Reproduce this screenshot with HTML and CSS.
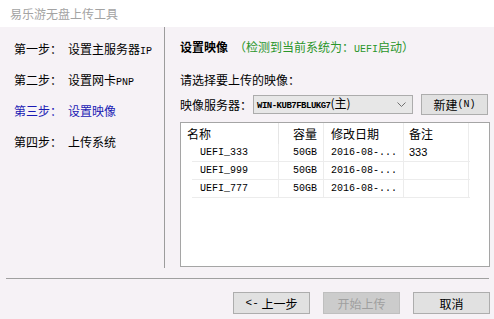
FILE: index.html
```html
<!DOCTYPE html>
<html>
<head>
<meta charset="utf-8">
<link rel="stylesheet" href="styles.css">
</head>
<body>
<div class="window">
  <div class="titlebar">易乐游无盘上传工具</div>
  <div class="main">
    <div class="steps">
      <div class="step"><span class="label">第一步：</span><span>设置主服务器<span class="lat">IP</span></span></div>
      <div class="step"><span class="label">第二步：</span><span>设置网卡<span class="lat">PNP</span></span></div>
      <div class="step active"><span class="label">第三步：</span><span>设置映像</span></div>
      <div class="step"><span class="label">第四步：</span><span>上传系统</span></div>
    </div>
    <div class="content">
      <div class="heading"><b>设置映像</b><span class="detect">（检测到当前系统为：<span class="lat">UEFI</span>启动）</span></div>
      <div class="prompt">请选择要上传的映像：</div>
      <div class="server-row">
        <span class="server-label">映像服务器：</span>
        <div class="combo">
          <span class="combo-text"><span class="host">WIN-KUB7FBLUKG7</span>(主)</span>
          <svg class="chev" width="9" height="6" viewBox="0 0 9 6"><polyline points="0.5,0.5 4.5,4.5 8.5,0.5" fill="none" stroke="#707070" stroke-width="1"/></svg>
        </div>
        <div class="btn new-btn">新建<span class="lat">(N)</span></div>
      </div>
      <div class="listbox">
        <div class="lv-head">
          <div class="c1 hc">名称</div>
          <div class="c2 hc right">容量</div>
          <div class="c3 hc">修改日期</div>
          <div class="c4 hc">备注</div>
        </div>
        <div class="lv-row">
          <div class="r1 mono">UEFI_333</div>
          <div class="c2 mono right">50GB</div>
          <div class="c3 mono">2016-08-...</div>
          <div class="c4 note">333</div>
        </div>
        <div class="lv-row">
          <div class="r1 mono">UEFI_999</div>
          <div class="c2 mono right">50GB</div>
          <div class="c3 mono">2016-08-...</div>
          <div class="c4 note"></div>
        </div>
        <div class="lv-row">
          <div class="r1 mono">UEFI_777</div>
          <div class="c2 mono right">50GB</div>
          <div class="c3 mono">2016-08-...</div>
          <div class="c4 note"></div>
        </div>
      </div>
    </div>
  </div>
  <div class="footer">
    <div class="sep"></div>
    <div class="buttons">
      <div class="btn fbtn"><span class="arrow">&lt;-</span>&nbsp;上一步</div>
      <div class="btn fbtn disabled">开始上传</div>
      <div class="btn fbtn">取消</div>
    </div>
  </div>
</div>
</body>
</html>
```
FILE: styles.css
```css
* { box-sizing: border-box; }
html, body { margin: 0; padding: 0; }
body {
  width: 494px;
  height: 319px;
  overflow: hidden;
  background: #f6f2f6;
  font-family: "Noto Sans CJK SC", "Noto Sans", sans-serif;
  font-size: 12px;
  color: #000;
}
.window { width: 494px; height: 319px; display: flex; flex-direction: column; }
.titlebar {
  height: 27px;
  background: #fff;
  color: #a3a3a3;
  line-height: 27px;
  padding-left: 10px;
  font-size: 12px;
}
.lat { font-family: "Liberation Mono", monospace; font-size: 10px; }
.main { display: flex; height: 241px; }
.steps {
  width: 165px;
  border-right: 1px solid #9c9c9c;
  padding-top: 6px;
  padding-left: 14px;
}
.step { height: 31px; line-height: 31px; display: flex; white-space: nowrap; }
.step .label { width: 54px; }
.step.active { color: #1a1ab4; }
.content { flex: 1; padding-left: 15px; padding-right: 4px; display: flex; flex-direction: column; }
.heading { margin-top: 10px; height: 20px; line-height: 20px; white-space: nowrap; }
.heading b { font-weight: 700; }
.detect { color: #2a962a; margin-left: 6px; }
.prompt { margin-top: 13px; height: 20px; line-height: 20px; }
.server-row { margin-top: 4px; height: 21px; display: flex; align-items: center; }
.server-label { width: 73px; white-space: nowrap; }
.combo {
  width: 160px;
  height: 19px;
  background: #e7e7e7;
  border: 1px solid #acacac;
  display: flex;
  align-items: center;
  justify-content: space-between;
  padding: 0 6px 0 3px;
}
.combo-text { white-space: nowrap; line-height: 17px; }
.host { font-family: "Liberation Mono", monospace; font-size: 9px; letter-spacing: -0.5px; font-weight: 700; }
.btn {
  background: #e1e1e1;
  border: 1px solid #adadad;
  display: flex;
  align-items: center;
  justify-content: center;
  white-space: nowrap;
}
.new-btn { width: 67px; height: 21px; margin-left: 8px; }
.listbox {
  margin-top: 7px;
  width: 310px;
  height: 145px;
  background: #fff;
  border: 1px solid #a5a5a5;
}
.lv-head { display: flex; height: 21px; }
.hc { line-height: 21px; border-right: 1px solid #e5e5e5; }
.c1 { width: 98px; padding-left: 6px; }
.c2 { width: 45px; padding-right: 6px; border-right: 1px solid #ececec; }
.c3 { width: 80px; padding-left: 7px; border-right: 1px solid #ececec; }
.c4 { width: 65px; padding-left: 5px; border-right: 1px solid #ececec; }
.right { text-align: right; }
.lv-row { display: flex; height: 18px; margin-left: 11px; width: 278px; border-bottom: 1px solid #ececec; }
.lv-row > div { line-height: 17px; }
.r1 { width: 87px; padding-left: 8px; border-right: 1px solid #ececec; }
.mono { font-family: "Liberation Mono", monospace; font-size: 10px; }
.note { font-family: "Liberation Sans", sans-serif; font-size: 11px; }
.footer { display: flex; flex-direction: column; }
.sep { margin: 10px 5px 0 6px; height: 1px; background: #a0a0a0; }
.buttons { display: flex; justify-content: flex-end; gap: 13px; padding-right: 4px; margin-top: 13px; }
.fbtn { width: 77px; height: 22px; }
.arrow { font-family: "Liberation Mono", monospace; font-size: 11px; }
.disabled { background: #cccccc; border-color: #bfbfbf; color: #9f9f9f; }
```
